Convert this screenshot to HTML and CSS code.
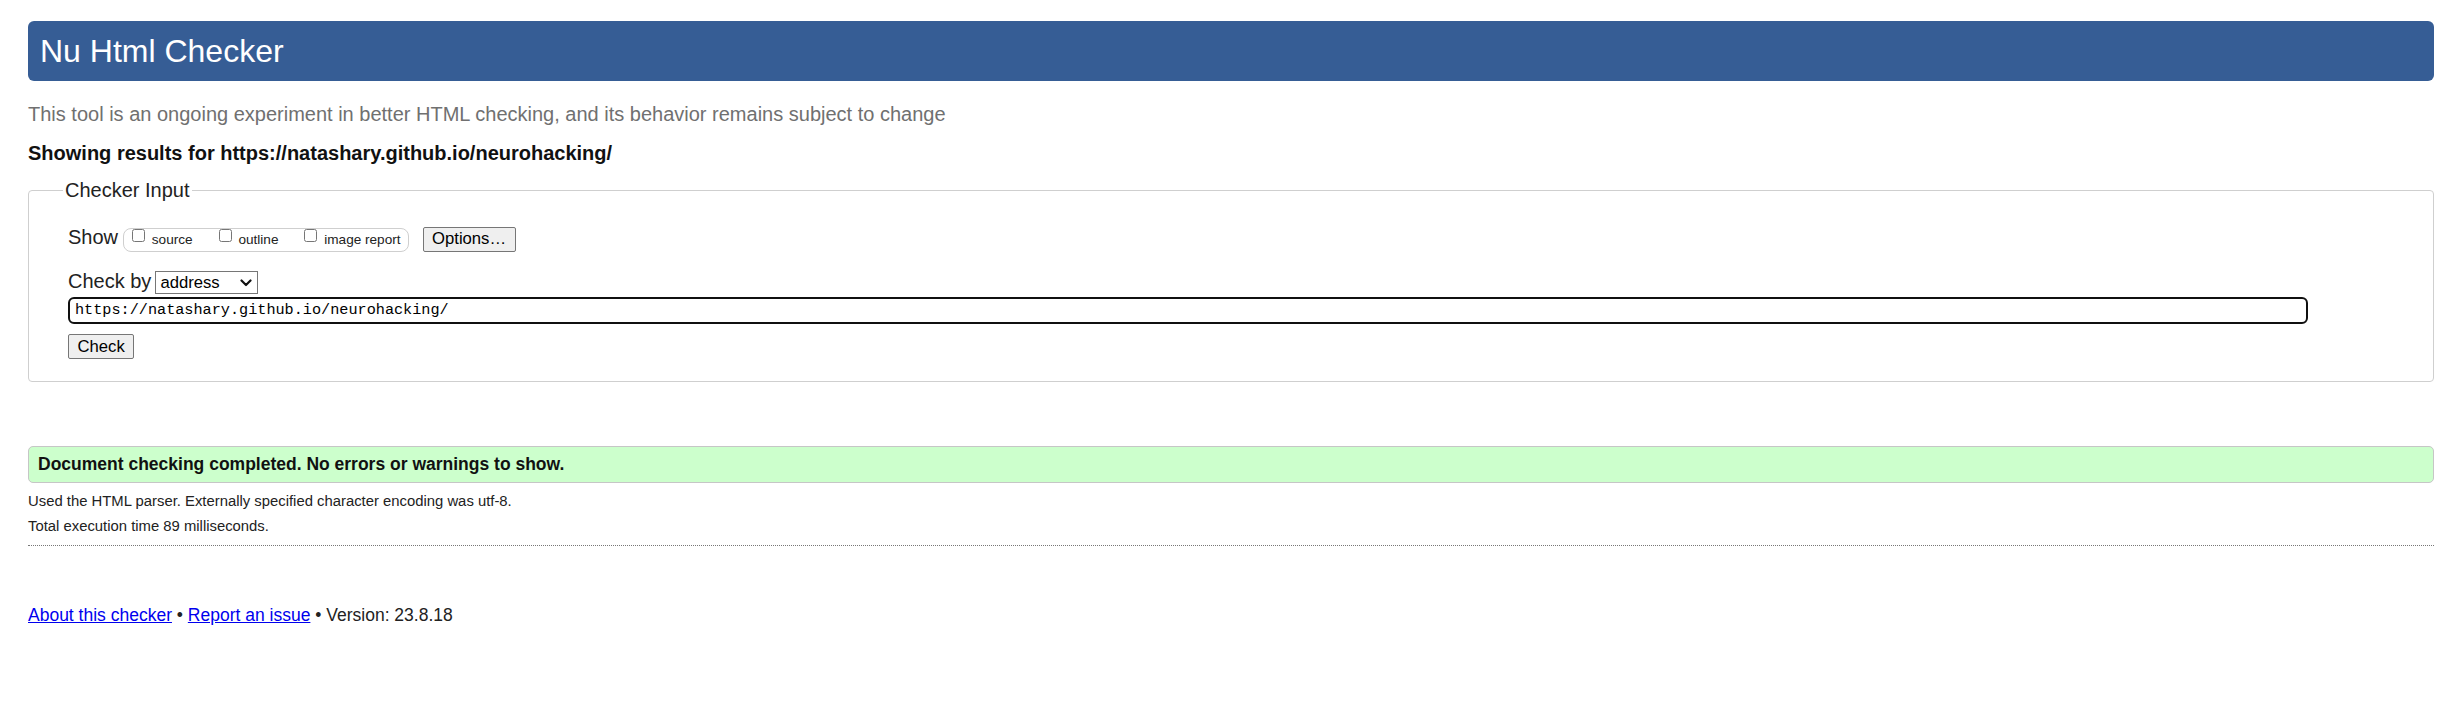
FILE: index.html
```html
<!DOCTYPE html>
<html lang="en">
<head>
<meta charset="utf-8">
<title>Showing results for https://natashary.github.io/neurohacking/ - Nu Html Checker</title>
<link rel="stylesheet" href="styles.css">
</head>
<body>
<header class="masthead"><h1 class="title">Nu Html Checker</h1></header>
<p class="intro">This tool is an ongoing experiment in better HTML checking, and its behavior remains subject to change</p>
<p class="results-for">Showing results for https://natashary.github.io/neurohacking/</p>
<form class="checker" action="#">
  <fieldset class="checker-input">
    <legend class="legend">Checker Input</legend>
    <div class="row"><span class="row-label">Show</span><span class="opts"><label class="opt"><input class="cb" type="checkbox"> source</label><label class="opt"><input class="cb" type="checkbox"> outline</label><label class="opt"><input class="cb" type="checkbox"> image report</label></span><button type="button" class="btn btn-options">Options…</button></div>
    <div class="row row-by"><label class="row-label" for="docselect">Check by</label><span class="select-wrap"><select id="docselect" class="select"><option>address</option><option>file upload</option><option>text input</option></select><svg class="chevron" width="12" height="8" viewBox="0 0 12 8" aria-hidden="true"><path d="M1.5 1.5 L6 6 L10.5 1.5" fill="none" stroke="#111" stroke-width="2.2" stroke-linecap="round" stroke-linejoin="round"/></svg></span></div>
    <input class="url" type="url" value="https://natashary.github.io/neurohacking/">
    <button type="submit" class="btn btn-check">Check</button>
  </fieldset>
</form>
<div class="success">Document checking completed. No errors or warnings to show.</div>
<div class="details">
  <p class="detail">Used the HTML parser. Externally specified character encoding was utf-8.</p>
  <p class="detail">Total execution time 89 milliseconds.</p>
</div>
<hr class="rule">
<p class="footer"><a class="link" href="#">About this checker</a> • <a class="link" href="#">Report an issue</a> • Version: 23.8.18</p>
</body>
</html>
```

FILE: styles.css
```css
html, body {
  background: #fff;
}

body {
  margin: 0;
  padding: 21px 22px 0 28px;
  font-family: "Liberation Sans", Arial, sans-serif;
  color: #222;
}

.masthead {
  background: #365d95;
  border-radius: 6px;
  padding: 11px 12px;
}

.title {
  margin: 0;
  font-size: 32px;
  line-height: 38px;
  font-weight: normal;
  color: #fff;
}

.intro {
  margin: 21px 0 0;
  font-size: 20px;
  line-height: 24px;
  color: #707070;
}

.results-for {
  margin: 15px 0 0;
  font-size: 20px;
  line-height: 24px;
  font-weight: bold;
  color: #111;
}

.checker {
  margin: 0;
}

.checker-input {
  margin: 13px 0 0;
  padding: 23px 22px 22px 39px;
  border: 1px solid #cfcfcf;
  border-radius: 4px;
  min-width: 0;
}

.legend {
  margin-left: -5px;
  padding: 0 2px;
  font-size: 20px;
  line-height: 24px;
  color: #222;
}

.row {
  display: flex;
  align-items: baseline;
}

.row-label {
  font-size: 20px;
  line-height: 24px;
  color: #222;
}

.opts {
  display: inline-block;
  margin-left: 5px;
  border: 1px solid #cfcfcf;
  border-radius: 8px;
  padding: 0 7px 0 4px;
  font-size: 13.6px;
  line-height: 22px;
  color: #222;
  white-space: nowrap;
}

.opt {
  margin-right: 22px;
}

.opt:last-child {
  margin-right: 0;
}

.cb {
  width: 13px;
  height: 13px;
  margin: 0 3px 0 4px;
  vertical-align: 2px;
}

.btn {
  height: 25px;
  padding: 0 8.5px;
  border: 1px solid #767676;
  border-radius: 2px;
  background: #efefef;
  color: #000;
  font-family: "Liberation Sans", Arial, sans-serif;
  font-size: 16.67px;
  line-height: normal;
}

.btn-options {
  margin-left: 14px;
}

.row-by {
  margin-top: 16.5px;
}

.select-wrap {
  position: relative;
  display: inline-block;
  margin-left: 4px;
}

.select {
  -webkit-appearance: none;
  appearance: none;
  box-sizing: border-box;
  width: 103px;
  height: 23px;
  margin: 0;
  padding: 0 20px 0 4px;
  font-family: "Liberation Sans", Arial, sans-serif;
  font-size: 16.67px;
  line-height: 21px;
  color: #000;
  background: #fff;
  border: 1px solid #767676;
  border-radius: 0;
}

.chevron {
  position: absolute;
  right: 6px;
  top: 8px;
  pointer-events: none;
}

.url {
  display: block;
  box-sizing: border-box;
  width: 2240px;
  height: 27px;
  margin: 3px 0 0;
  padding: 0 5px;
  border: 2px solid #101010;
  border-radius: 6px;
  font-family: "Liberation Mono", "Courier New", monospace;
  font-size: 15.2px;
  color: #000;
  background: #fff;
  outline: none;
}

.btn-check {
  display: block;
  margin-top: 10.5px;
}

.success {
  margin-top: 64px;
  border: 1px solid #c6c6c6;
  border-radius: 5px;
  background: #ccffcc;
  padding: 0 9px;
  font-size: 17.5px;
  line-height: 35px;
  font-weight: bold;
  color: #111;
}

.details {
  margin-top: 6px;
}

.detail {
  margin: 0;
  font-size: 14.85px;
  line-height: 25px;
  color: #222;
}

.rule {
  margin: 6px 0 0;
  height: 0;
  border: 0;
  border-top: 1px dotted #777;
}

.footer {
  margin: 58px 0 0;
  font-size: 17.5px;
  line-height: 22px;
  color: #222;
}

.link {
  color: #0000ee;
  text-decoration: underline;
}
```
